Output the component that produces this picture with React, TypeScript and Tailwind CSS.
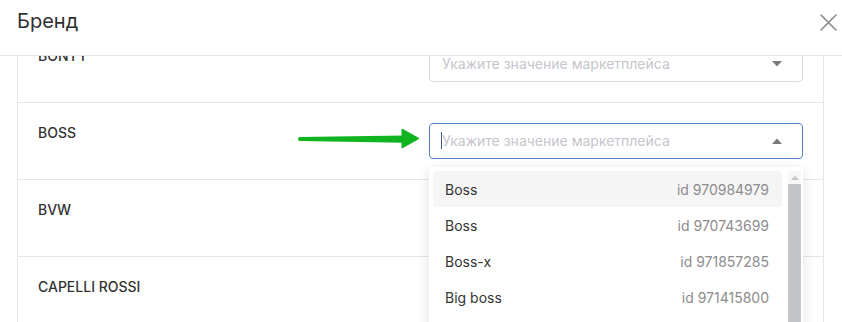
import React from "react";

const rows = ["BONTY", "BOSS", "BVW", "CAPELLI ROSSI"];
const options = [
  { name: "Boss", id: "id 970984979" },
  { name: "Boss", id: "id 970743699" },
  { name: "Boss-x", id: "id 971857285" },
  { name: "Big boss", id: "id 971415800" },
];

function Triangle({ up }: { up?: boolean }) {
  return (
    <svg width="10" height="6" viewBox="0 0 10 6" className="shrink-0">
      {up ? (
        <path d="M0 6 L5 0.5 L10 6 Z" fill="#7a7a7a" />
      ) : (
        <path d="M0 0 L5 5.5 L10 0 Z" fill="#7a7a7a" />
      )}
    </svg>
  );
}

function Select({ focused }: { focused?: boolean }) {
  return (
    <div
      className={
        "relative w-[374px] h-[36px] rounded-[4px] border flex items-center pl-[12px] pr-[20px] bg-white " +
        (focused ? "border-[#4f85c7]" : "border-[#d9d9d9]")
      }
    >
      {focused && <div className="absolute left-[11px] top-[8px] w-px h-[17px] bg-[#3a5a8a]" />}
      <span className="flex-1 text-[14px] leading-[20px] text-[#c5c5cc] whitespace-nowrap">
        Укажите значение маркетплейса
      </span>
      <Triangle up={focused} />
      {focused && (
        <div className="absolute left-[-1px] top-[43px] w-[374px] bg-white rounded-[4px] shadow-[0_3px_14px_rgba(0,0,0,0.12)] pt-[4px] pl-[4px] pr-[2px] flex z-20 h-[200px]">
          <div className="w-[349px] flex flex-col">
            {options.map((o, i) => (
              <div
                key={i}
                className={
                  "h-[36px] shrink-0 px-[12px] flex items-center justify-between rounded-[4px] text-[14px] " +
                  (i === 0 ? "bg-[#f5f5f5]" : "")
                }
              >
                <span className="text-[#333333]">{o.name}</span>
                <span className="text-[#8c8c8c] pr-px">{o.id}</span>
              </div>
            ))}
          </div>
          <div className="ml-[6px] w-[13px] flex flex-col">
            <div className="h-[13px] bg-[#f7f7f7] flex items-center justify-center">
              <svg width="8" height="5" viewBox="0 0 8 5">
                <path d="M0 5 L4 0.5 L8 5 Z" fill="#c8c8c8" />
              </svg>
            </div>
            <div className="flex-1 bg-[#c4c5c9]" />
          </div>
        </div>
      )}
    </div>
  );
}

export default function App() {
  return (
    <div
      className="relative w-[842px] h-[322px] bg-white overflow-hidden"
      style={{ fontFamily: "Inter, 'Noto Sans', sans-serif" }}
    >
      <div className="h-[56px] border-b border-[#e6e6e6] flex items-start justify-between pl-[17px] pr-[5px]">
        <div className="pt-[9px] text-[20px] leading-[24px] text-[#2f2f2f]">Бренд</div>
        <button className="mt-[13px] w-[18px] h-[18px] flex items-center justify-center">
          <svg width="17" height="17" viewBox="0 0 17 17">
            <path d="M1 1 L16 16 M16 1 L1 16" stroke="#8a8a8a" strokeWidth="1.6" strokeLinecap="round" />
          </svg>
        </button>
      </div>
      <div className="ml-[17px] w-[807px] h-[266px] border-x border-[#e6e6e6] overflow-hidden">
        <div className="-mt-[30px]">
          {rows.map((r, i) => (
            <div
              key={r}
              className="h-[77px] border-b border-[#e6e6e6] flex items-start justify-between pt-[20px] pl-[20px] pr-[20px]"
            >
              <div className="text-[14px] leading-[20px] font-medium text-[#333333]">{r}</div>
              {i < 2 && <Select focused={r === "BOSS"} />}
            </div>
          ))}
        </div>
      </div>
      <svg
        className="absolute left-[296px] top-[127px]"
        width="126"
        height="24"
        viewBox="0 0 126 24"
      >
        <path d="M4 12 L108 10.5 L108 13.8 Z" stroke="#0fb420" strokeWidth="4" strokeLinejoin="round" strokeLinecap="round" fill="#0fb420" />
        <path d="M106 2 L123 11.5 L106 21 Z" fill="#0fb420" strokeLinejoin="round" stroke="#0fb420" strokeWidth="1" />
      </svg>
    </div>
  );
}
